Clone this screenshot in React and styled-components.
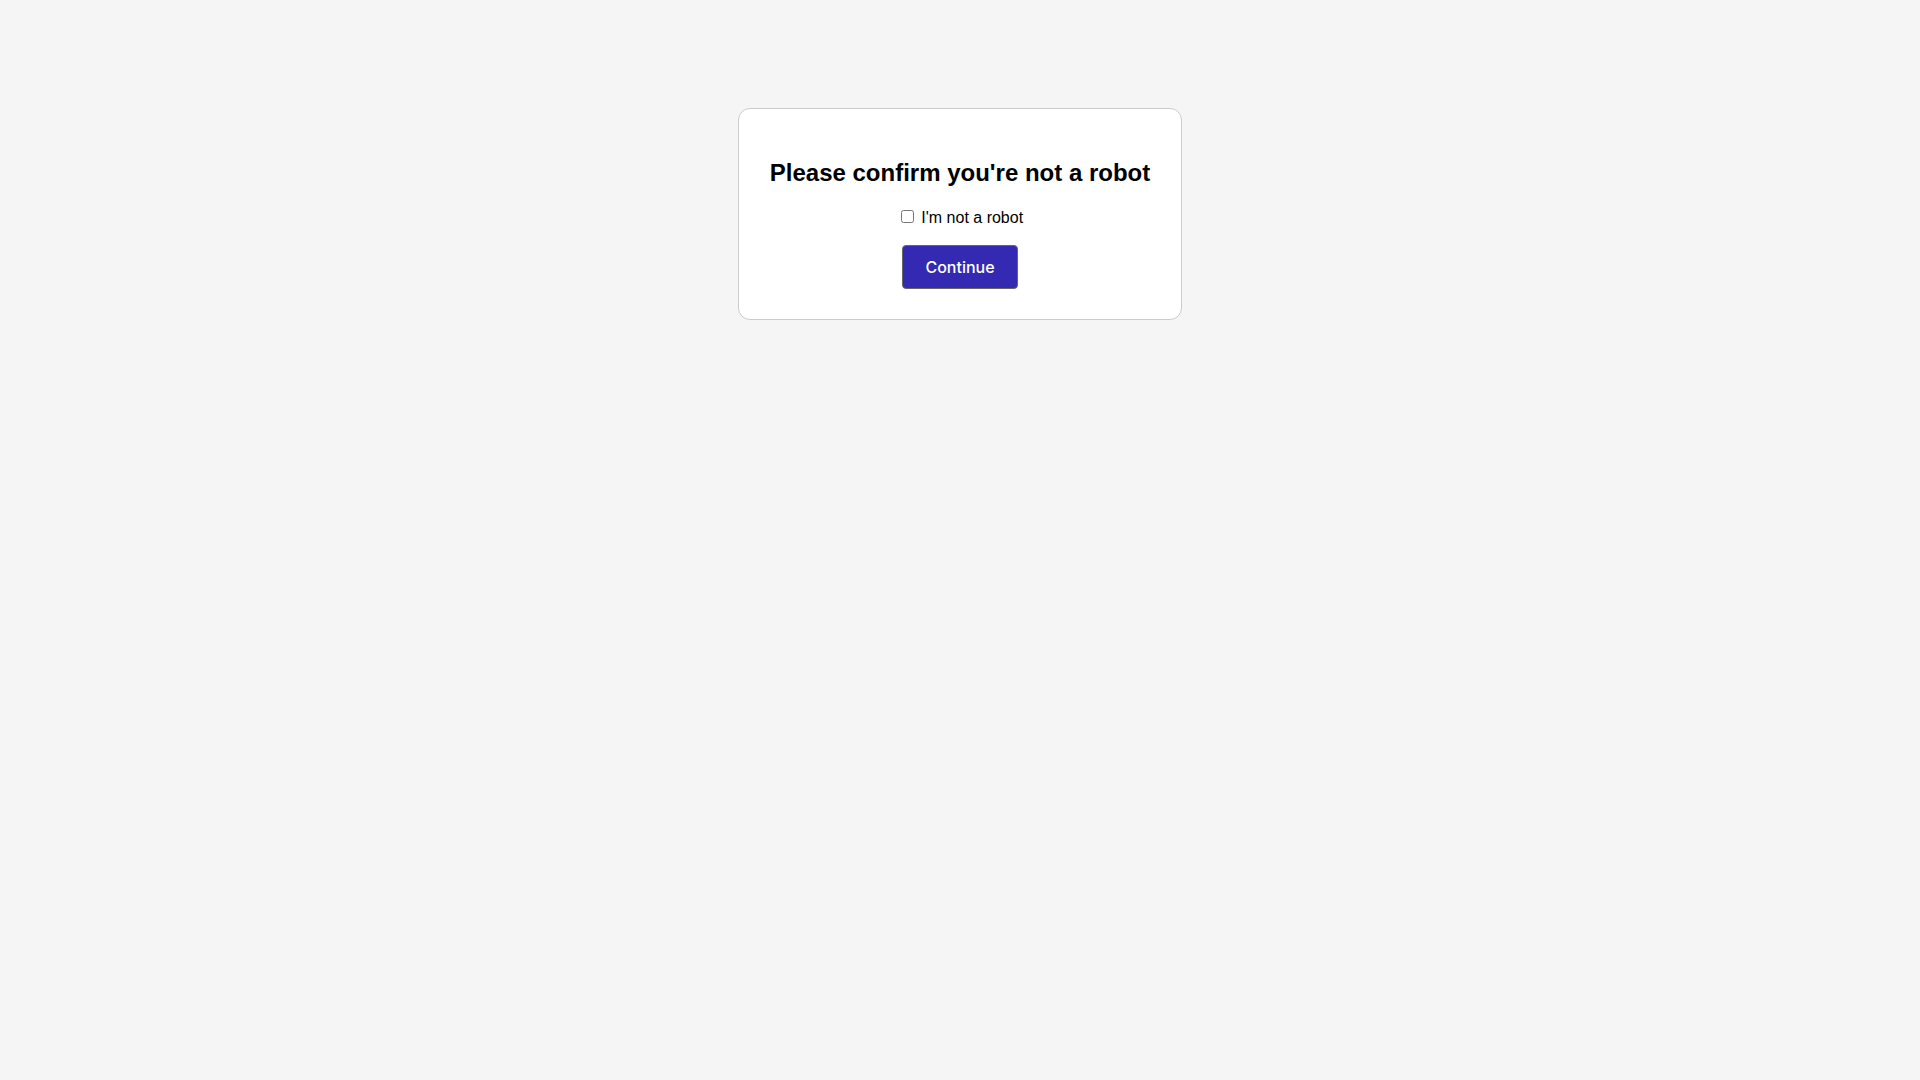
import React, { useState } from 'react';
import styled, { createGlobalStyle } from 'styled-components';

const GlobalStyle = createGlobalStyle`
  body {
    margin: 0;
    background: #f5f5f5;
    color: #000;
    font-family: Arial, "Liberation Sans", sans-serif;
    font-size: 16px;
  }
`;

const App = () => {
  const [checked, setChecked] = useState(false);

  return (
    <>
      <GlobalStyle />
      <Page>
        <Card onSubmit={(e) => e.preventDefault()}>
          <Title>Please confirm you're not a robot</Title>
          <CheckLabel>
            <input
              type="checkbox"
              checked={checked}
              onChange={(e) => setChecked(e.target.checked)}
            />{' '}
            I'm not a robot
          </CheckLabel>
          <Button type="submit">Continue</Button>
        </Card>
      </Page>
    </>
  );
};

const Page = styled.main`
  display: flex;
  justify-content: center;
  padding: 108px 16px 16px;
`;

const Card = styled.form`
  padding: 30px 31px;
  background: #fff;
  border: 1px solid #ccc;
  border-radius: 12px;
  text-align: center;
`;

const Title = styled.h2`
  margin: 20px 0;
  font-size: 24px;
  line-height: 28px;
`;

const CheckLabel = styled.label`
  display: block;
  margin-bottom: 17px;
  line-height: 20px;
`;

const Button = styled.button`
  padding: 12px 22px;
  background: #3429b2;
  border: 1px solid #666;
  border-radius: 4px;
  color: #fff;
  font-family: Inter, sans-serif;
  font-size: 16px;
  font-weight: 500;
  line-height: 18px;
  cursor: pointer;
`;

export default App;
